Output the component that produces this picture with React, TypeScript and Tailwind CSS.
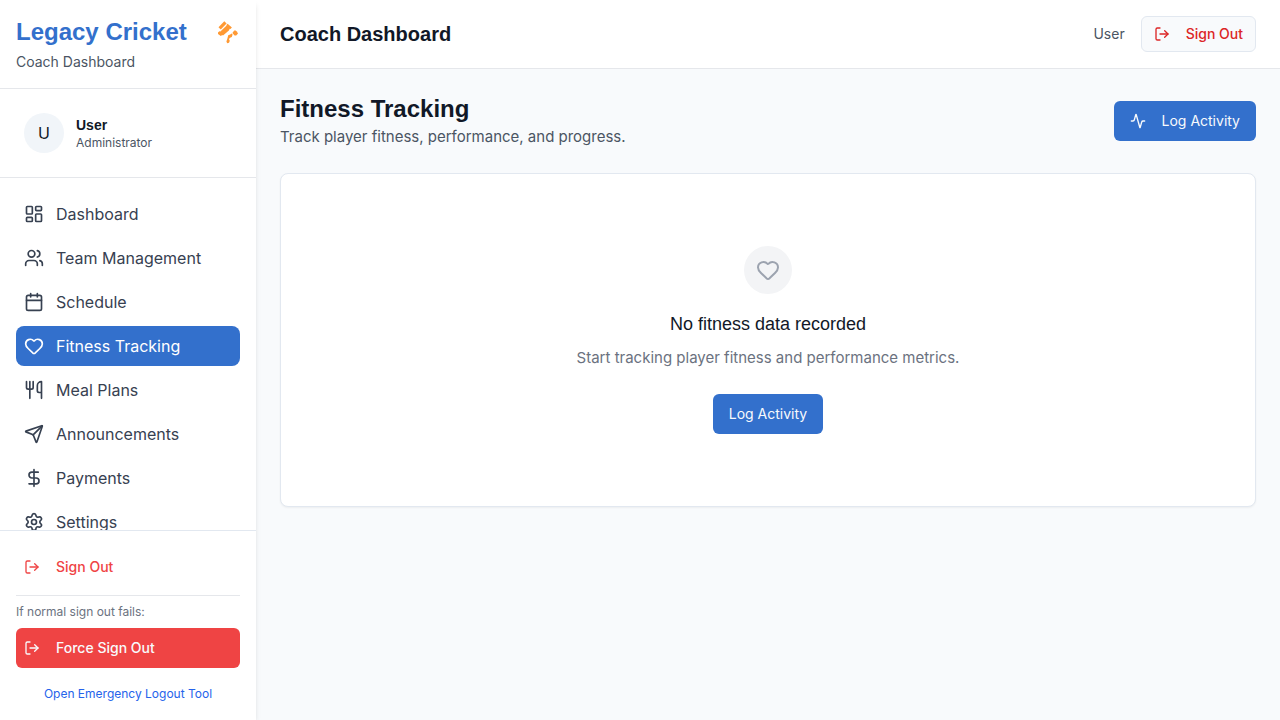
import { Activity, Calendar, DollarSign, Heart, LayoutDashboard, LogOut, Send, Settings, Users, Utensils } from "lucide-react";

const navItems = [
  { label: "Dashboard", icon: LayoutDashboard },
  { label: "Team Management", icon: Users },
  { label: "Schedule", icon: Calendar },
  { label: "Fitness Tracking", icon: Heart, active: true },
  { label: "Meal Plans", icon: Utensils },
  { label: "Announcements", icon: Send },
  { label: "Payments", icon: DollarSign },
  { label: "Settings", icon: Settings },
];

function CricketLogo() {
  return (
    <svg viewBox="0 0 24 28" className="h-7 w-6 shrink-0 fill-[#ff9933]" aria-hidden="true">
      <path d="M2.5 9.2 8.3 3.3 10.6 5.4 4.8 11.4Z" />
      <path d="M2 14.6 3.4 13.2 4.4 13.6 10.6 7.4 10.4 6.9 11.6 5.8 15.9 9.5 14.4 11 13.7 10.7 12.9 12.4 7 17.4 6.2 16.9 4.8 18 2 16Z" />
      <path d="M12.2 17.2 14.2 16.6 15.6 15.4 16.6 16.6 15.8 19 13.6 20 13 21.4 13.8 22.8 13 24.8 11.2 25.2 10.4 23.6 11.4 20.6Z" />
      <path d="M18.2 12.6 19.6 12.4 20.8 13.4 22 15.4 20.2 17.4 18.6 17.6 16.4 15Z" />
    </svg>
  );
}

function Sidebar() {
  return (
    <aside className="z-10 flex w-64 shrink-0 flex-col bg-white shadow-md">
      <div className="border-b border-[#e5e7eb] p-4">
        <div className="flex items-center justify-between">
          <p className="font-['Liberation_Sans',sans-serif] text-2xl font-bold text-[#3370cc]">Legacy Cricket</p>
          <CricketLogo />
        </div>
        <p className="mt-1 text-sm text-[#4b5563]">Coach Dashboard</p>
      </div>
      <div className="flex items-center gap-3 border-b border-[#e5e7eb] p-6">
        <span className="flex size-10 items-center justify-center rounded-full bg-[#f1f5f9]">U</span>
        <div>
          <p className="font-['Liberation_Sans',sans-serif] text-sm font-bold">User</p>
          <p className="text-xs text-[#4b5563]">Administrator</p>
        </div>
      </div>
      <nav className="min-h-0 flex-1 overflow-y-auto p-4 [scrollbar-width:none]">
        <ul className="flex flex-col gap-1">
          {navItems.map(({ label, icon: Icon, active }) => (
            <li key={label}>
              <a
                href="#"
                aria-current={active ? "page" : undefined}
                className={
                  active
                    ? "flex items-center gap-3 rounded-lg bg-[#3370cc] p-2 text-white"
                    : "flex items-center gap-3 rounded-lg p-2 text-[#374151]"
                }
              >
                <Icon size={20} />
                {label}
              </a>
            </li>
          ))}
        </ul>
      </nav>
      <div className="border-t border-[#e2e8f0] p-4">
        <button className="flex h-10 w-full items-center gap-4 rounded-md px-2 text-sm font-medium text-[#ef4444]">
          <LogOut size={16} />
          Sign Out
        </button>
        <div className="mt-2 border-t border-[#e5e7eb] pt-2">
          <p className="mb-2 text-xs text-[#6b7280]">If normal sign out fails:</p>
          <button className="flex h-10 w-full items-center gap-4 rounded-md bg-[#ef4444] px-2 text-sm font-medium text-[#f8fafc]">
            <LogOut size={16} />
            Force Sign Out
          </button>
        </div>
        <a href="#" className="mt-4 block text-center text-xs leading-5 text-[#2563eb]">
          Open Emergency Logout Tool
        </a>
      </div>
    </aside>
  );
}

export default function App() {
  return (
    <div className="flex h-screen bg-[#f8fafc] font-[Inter,sans-serif] text-[#111827]">
      <Sidebar />
      <div className="flex min-w-0 flex-1 flex-col">
        <header className="flex items-center justify-between border-b border-[#e5e7eb] bg-white px-6 py-4">
          <h1 className="font-['Liberation_Sans',sans-serif] text-xl font-bold">Coach Dashboard</h1>
          <div className="flex items-center gap-4">
            <span className="text-sm text-[#4b5563]">User</span>
            <button className="flex h-9 items-center gap-4 rounded-md border border-[#e2e8f0] bg-[#f8fafc] px-3 text-sm font-medium text-[#dc2626]">
              <LogOut size={16} />
              Sign Out
            </button>
          </div>
        </header>
        <main className="flex-1 overflow-y-auto p-6">
          <div className="mb-6 flex items-center justify-between">
            <div>
              <h2 className="font-['Liberation_Sans',sans-serif] text-2xl font-bold">Fitness Tracking</h2>
              <p className="text-[15px] leading-6 text-[#4b5563]">Track player fitness, performance, and progress.</p>
            </div>
            <button className="flex h-10 items-center gap-4 rounded-md bg-[#3370cc] px-4 text-sm text-[#f8fafc]">
              <Activity size={16} />
              Log Activity
            </button>
          </div>
          <section className="flex flex-col items-center rounded-lg border border-[#e2e8f0] bg-white px-6 py-18 text-center shadow-xs">
            <span className="mb-4 flex size-12 items-center justify-center rounded-full bg-[#f3f4f6] text-[#9ca3af]">
              <Heart size={24} />
            </span>
            <h3 className="mb-2 font-['Liberation_Sans',sans-serif] text-lg">No fitness data recorded</h3>
            <p className="mb-6 text-[15px] leading-6 text-[#6b7280]">Start tracking player fitness and performance metrics.</p>
            <button className="h-10 rounded-md bg-[#3370cc] px-4 text-sm text-[#f8fafc]">Log Activity</button>
          </section>
        </main>
      </div>
    </div>
  );
}
